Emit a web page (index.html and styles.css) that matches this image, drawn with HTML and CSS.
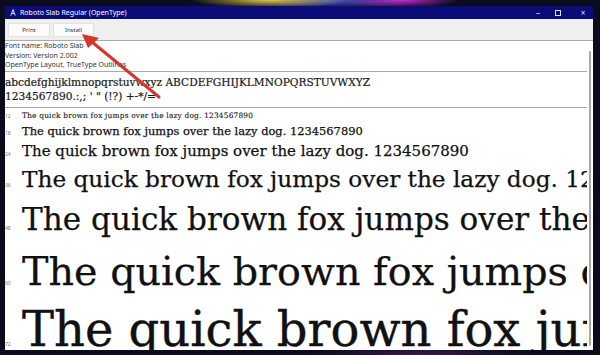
FILE: index.html
```html
<!DOCTYPE html>
<html lang="en">
<head>
  <meta charset="UTF-8" />
  <title>Roboto Slab Regular (OpenType)</title>
  <link rel="stylesheet" href="styles.css">
</head>
<body>
  <div class="window">
    <div class="titlebar">
      <svg class="app-icon" width="6" height="7" viewBox="0 0 6 7">
        <path d="M0.8 6.6 L3 0.5 L5.2 6.6 M1.7 4.4 H4.3" fill="none" stroke="#cfe0ff" stroke-width="1"/>
      </svg>
      <span class="title">Roboto Slab Regular (OpenType)</span>
      <div class="controls">
        <span class="ctl min">&#8211;</span>
        <span class="ctl max"><span class="max-box"></span></span>
        <span class="ctl close">&#215;</span>
      </div>
    </div>

    <div class="toolbar">
      <button class="tool-button print">Print</button>
      <button class="tool-button install">Install</button>
    </div>

    <div class="content">
      <div class="info">
        <div>Font name: Roboto Slab</div>
        <div>Version: Version 2.002</div>
        <div>OpenType Layout, TrueType Outlines</div>
      </div>

      <div class="charset">
        <div>abcdefghijklmnopqrstuvwxyz ABCDEFGHIJKLMNOPQRSTUVWXYZ</div>
        <div>1234567890.:,; ' " (!?) +-*/=</div>
      </div>

      <div class="samples">
        <div class="row row-12"><span class="size">12</span><span class="sample">The quick brown fox jumps over the lazy dog. 1234567890</span></div>
        <div class="row row-18"><span class="size">18</span><span class="sample">The quick brown fox jumps over the lazy dog. 1234567890</span></div>
        <div class="row row-24"><span class="size">24</span><span class="sample">The quick brown fox jumps over the lazy dog. 1234567890</span></div>
        <div class="row row-36"><span class="size">36</span><span class="sample">The quick brown fox jumps over the lazy dog. 1234567890</span></div>
        <div class="row row-48"><span class="size">48</span><span class="sample">The quick brown fox jumps over the lazy dog. 1234567890</span></div>
        <div class="row row-60"><span class="size">60</span><span class="sample">The quick brown fox jumps over the lazy dog. 1234567890</span></div>
        <div class="row row-72"><span class="size">72</span><span class="sample">The quick brown fox jumps over the lazy dog. 1234567890</span></div>
      </div>

      <div class="scrollbar"></div>
    </div>
  </div>

  <svg class="arrow" width="600" height="355" viewBox="0 0 600 355">
    <line x1="159" y1="97" x2="92" y2="42" stroke="#d8342b" stroke-width="3" stroke-linecap="round"/>
    <polygon points="82,34 99,38 88,48" fill="#d8342b"/>
  </svg>
</body>
</html>
```

FILE: styles.css
```css
body {
  margin: 0;
  width: 600px;
  height: 355px;
  overflow: hidden;
  position: relative;
  background:
    radial-gradient(ellipse 60px 8px at 400px 0px, #c02bd0, transparent),
    radial-gradient(ellipse 80px 8px at 270px 0px, #e0c640, transparent),
    radial-gradient(ellipse 90px 10px at 330px 0px, #3a52c8, transparent),
    radial-gradient(ellipse 120px 10px at 420px 355px, #3b1850, transparent),
    #0a0b1c;
  font-family: "Noto Sans", sans-serif;
}
.window {
  margin: 6px 0 0 5px;
  width: 588px;
  height: 344px;
  display: flex;
  flex-direction: column;
  background: #fff;
}
.titlebar {
  height: 13px;
  flex: none;
  background: #0b0c78;
  color: #fff;
  display: flex;
  align-items: center;
  font-size: 7px;
  padding-left: 5px;
}
.app-icon {
  margin-right: 4px;
}
.title {
  flex: 1;
  white-space: nowrap;
}
.controls {
  display: flex;
  align-items: center;
  padding-right: 6px;
}
.ctl {
  width: 8px;
  text-align: center;
  font-size: 8px;
  color: #dfe2ff;
}
.max {
  margin-left: 12px;
}
.close {
  margin-left: 17px;
}
.max-box {
  display: inline-block;
  width: 4px;
  height: 4px;
  border: 1px solid #dfe2ff;
}
.toolbar {
  height: 21px;
  flex: none;
  background: #efefef;
  display: flex;
  align-items: center;
  gap: 3px;
  padding-left: 3px;
  border-bottom: 1px solid #a9a9a9;
}
.tool-button {
  height: 14px;
  background: #fbfbfb;
  border: 1px solid #e2e2e2;
  font-family: "Noto Sans", sans-serif;
  font-size: 6px;
  color: #333;
  padding: 0;
}
.print {
  width: 42px;
}
.install {
  width: 41px;
}
.content {
  flex: 1;
  position: relative;
  overflow: hidden;
  padding-right: 6px;
}
.info {
  font-size: 7px;
  line-height: 9.5px;
  color: #333;
  padding: 0 0 1px 0;
  border-bottom: 1px solid #a9a9a9;
}
.charset {
  font-family: "DejaVu Serif", serif;
  font-size: 10.6px;
  line-height: 14px;
  color: #1a1a1a;
  padding: 3px 0 4px 0;
  border-bottom: 1px solid #a9a9a9;
  white-space: nowrap;
  -webkit-text-stroke: 0.2px #1a1a1a;
}
.samples {
  color: #111;
  overflow: hidden;
}
.row {
  display: flex;
  align-items: baseline;
  white-space: nowrap;
}
.size {
  width: 17px;
  flex: none;
  font-size: 5px;
  color: #777;
}
.sample {
  font-family: "DejaVu Serif", serif;
  -webkit-text-stroke: 0.25px #111;
}
.row-12 { height: 16px; line-height: 16px; }
.row-12 .sample { font-size: 7.4px; letter-spacing: 0.2px; -webkit-text-stroke: 0.1px #111; }
.row-18 { height: 14px; line-height: 14px; }
.row-18 .sample { font-size: 11.45px; }
.row-24 { height: 26px; line-height: 26px; }
.row-24 .sample { font-size: 15px; }
.row-36 { height: 30px; line-height: 30px; }
.row-36 .sample { font-size: 23.2px; }
.row-48 { height: 51px; line-height: 51px; }
.row-48 .sample { font-size: 31.1px; }
.row-60 { height: 52px; line-height: 52px; }
.row-60 .sample { font-size: 39.7px; }
.row-72 { height: 64px; line-height: 64px; }
.row-72 .sample { font-size: 48px; -webkit-text-stroke: 0.4px #111; }
.scrollbar {
  position: absolute;
  right: 2px;
  top: 10px;
  bottom: 4px;
  width: 2px;
  border-radius: 1px;
  background: #a8a8a8;
}
.arrow {
  position: absolute;
  left: 0;
  top: 0;
  pointer-events: none;
}
```
